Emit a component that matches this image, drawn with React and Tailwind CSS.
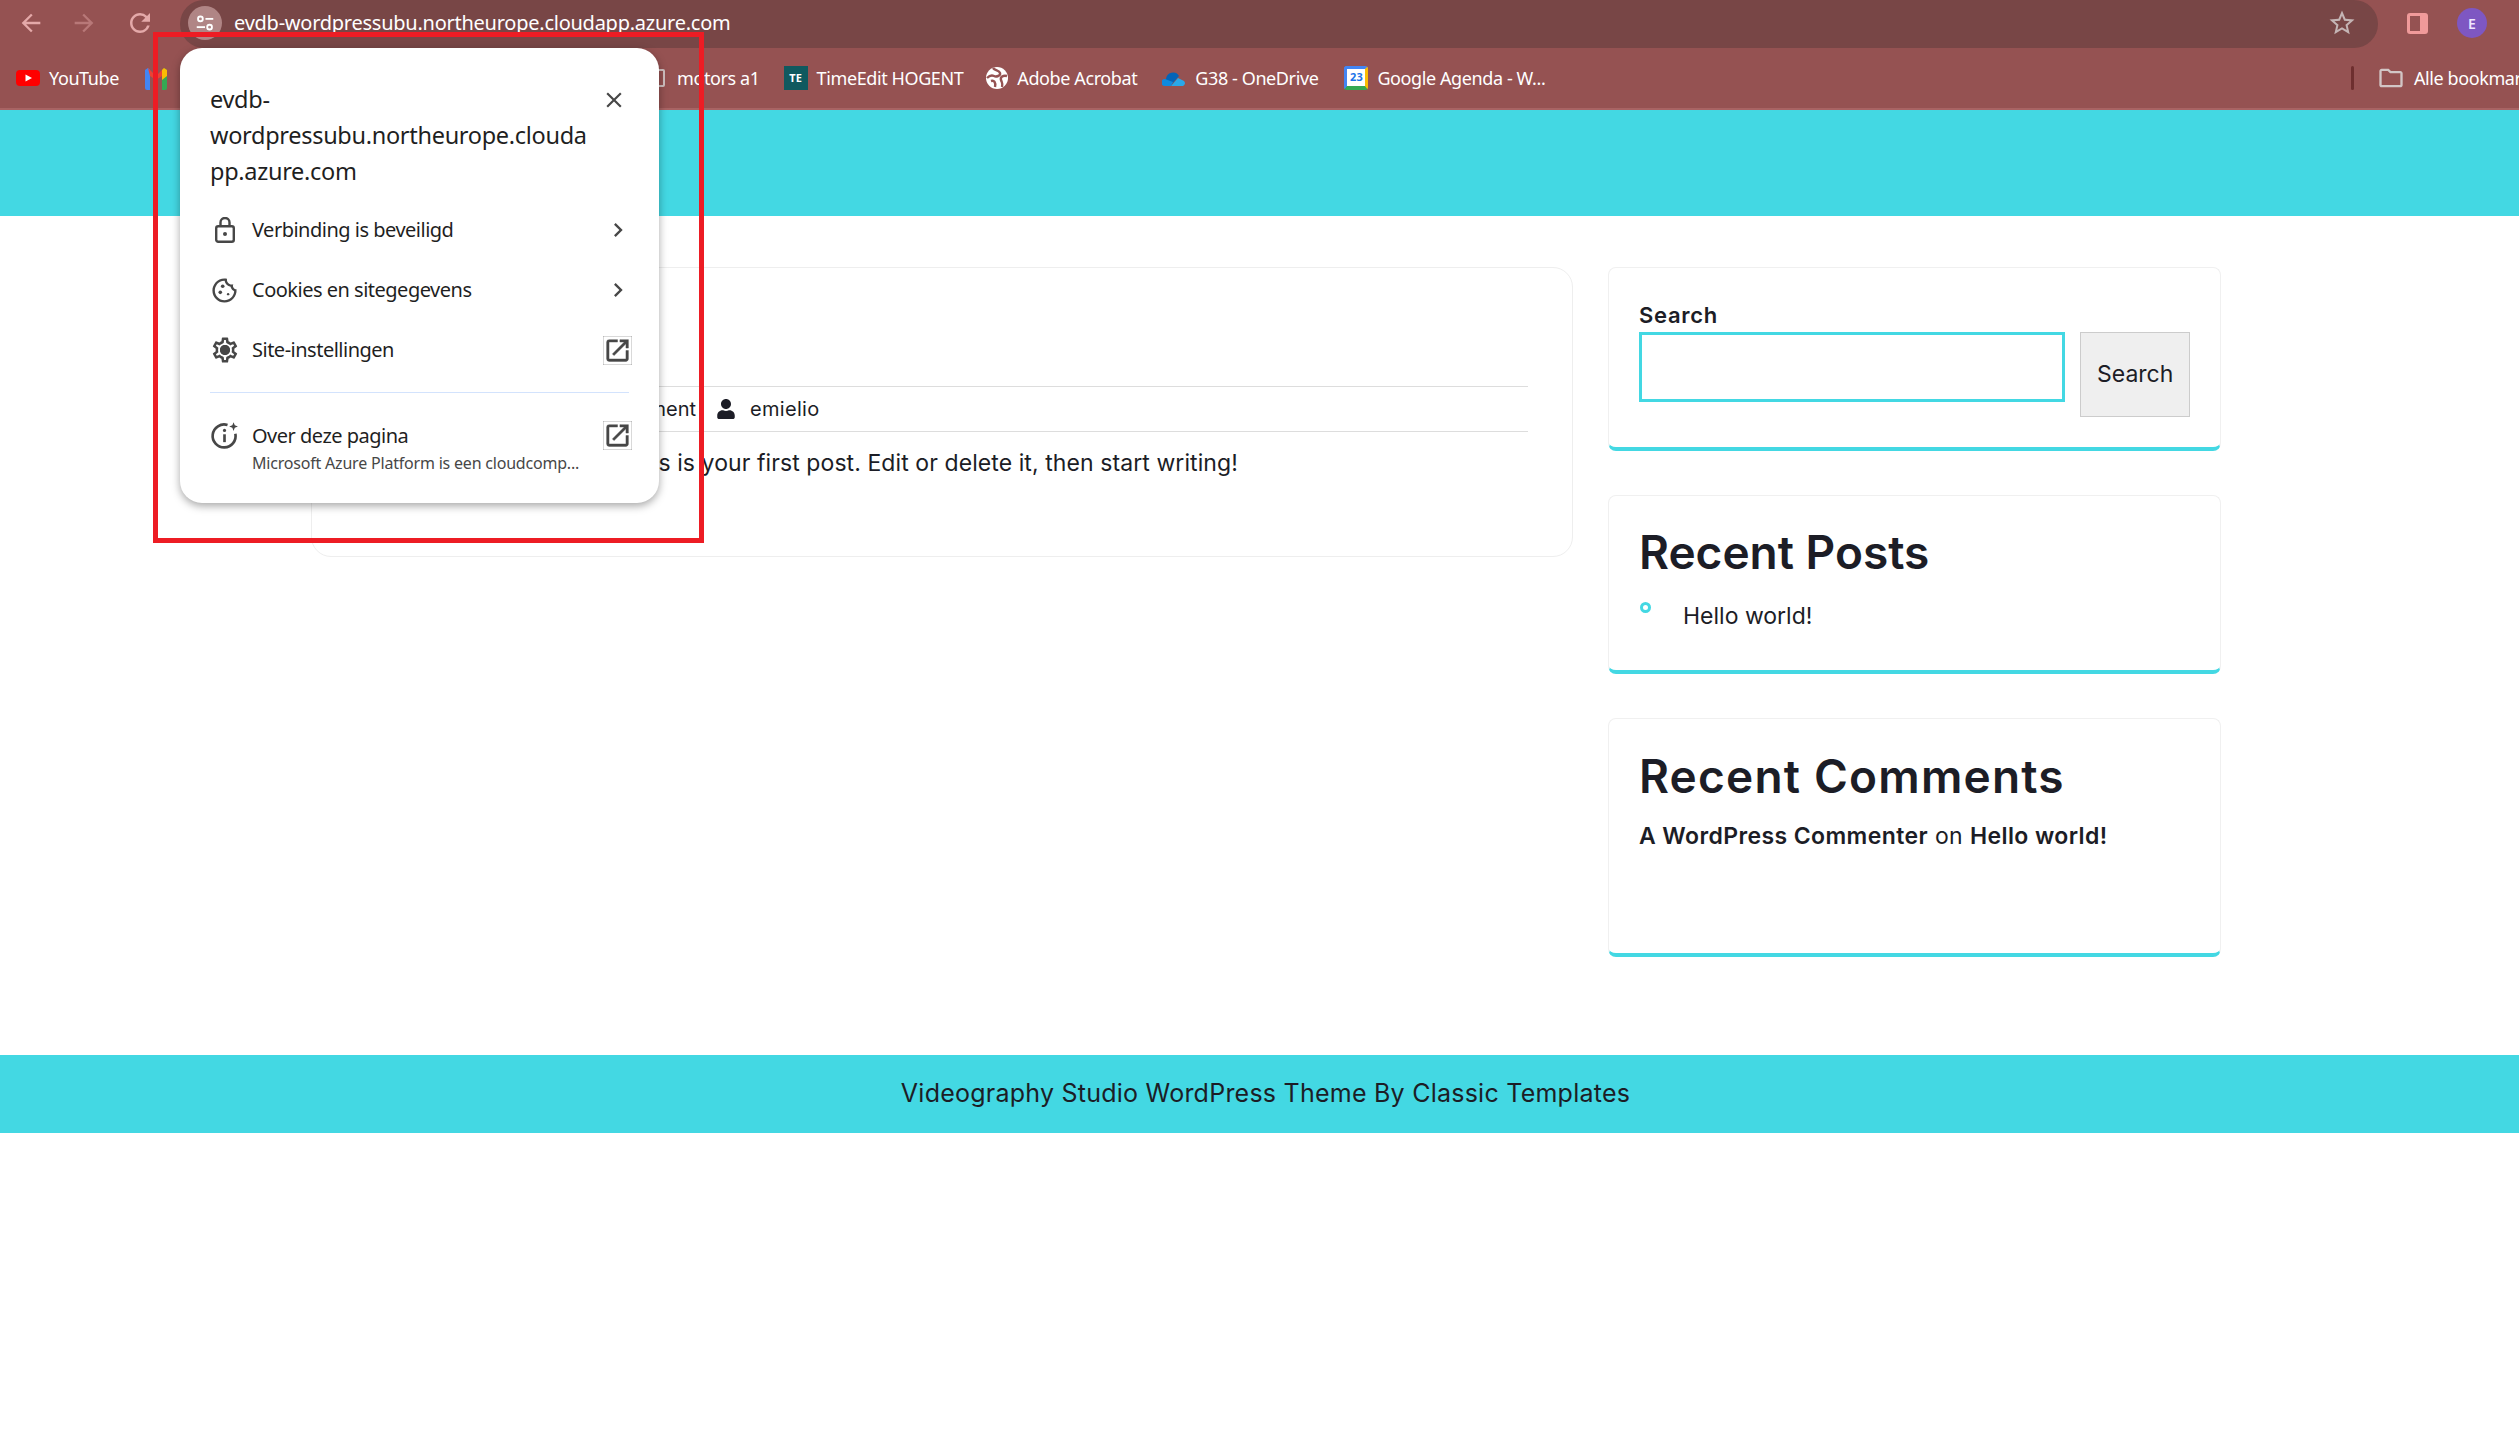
import {
  MdArrowBack,
  MdArrowForward,
  MdRefresh,
  MdStarBorder,
  MdChevronRight,
  MdClose,
  MdOutlineCookie,
  MdOutlineSettings,
  MdOpenInNew,
  MdOutlineFolder,
} from "react-icons/md"
import { FaUser } from "react-icons/fa"

const ui = "font-['Noto_Sans',sans-serif]"
const poppins = "font-['Inter',sans-serif]"

function Bookmark({ icon, label, className }) {
  return (
    <div className={`flex items-center gap-[9px] shrink-0 ${className}`}>
      {icon}
      <span className="text-[18px] tracking-[-0.4px] text-white whitespace-nowrap">{label}</span>
    </div>
  )
}

function SiteInfoIcon({ className }) {
  return (
    <svg viewBox="0 0 24 24" className={className} fill="none" stroke="currentColor" strokeWidth="2">
      <circle cx="7" cy="7.5" r="2.6" />
      <path d="M12.5 7.5H21" />
      <circle cx="17" cy="16.5" r="2.6" />
      <path d="M3 16.5h9" />
    </svg>
  )
}

function LockIcon() {
  return (
    <svg viewBox="0 0 20 26" className="ml-[5px] w-[20px] h-[26px]" fill="none" stroke="currentColor" strokeWidth="2.4">
      <rect x="1.2" y="9.2" width="17.6" height="15.6" rx="2" />
      <path d="M5.5 9V5.5a4.5 4.5 0 0 1 9 0V9" />
      <circle cx="10" cy="17" r="2" fill="currentColor" stroke="none" />
    </svg>
  )
}

function GearIcon() {
  return (
    <span className="relative flex h-[30px] w-[30px] items-center justify-center">
      <MdOutlineSettings className="h-[30px] w-[30px]" />
      <span className="absolute h-[10px] w-[10px] rounded-full bg-[#474747]" />
    </span>
  )
}

function AboutIcon({ className }) {
  return (
    <svg viewBox="0 0 24 24" className={className} fill="none" stroke="currentColor" strokeWidth="2.2">
      <path d="M14.5 3.3A9.5 9.5 0 1 0 21 10.5" />
      <path d="M12 11v6.5" />
      <circle cx="12" cy="7.8" r="1.3" fill="currentColor" stroke="none" />
      <path d="M19.5 1l1 2.6 2.6 1-2.6 1-1 2.6-1-2.6-2.6-1 2.6-1z" fill="currentColor" stroke="none" />
    </svg>
  )
}

function ExternalIcon() {
  return <MdOpenInNew className="w-[29px] h-[29px]" stroke="currentColor" strokeWidth={0.35} />
}

function PopupRow({ icon, label, trailing }) {
  return (
    <div className="flex items-center h-[60px] pl-[30px] pr-[27px]">
      <span className="w-[42px] flex items-center text-[#474747]">{icon}</span>
      <span className="flex-1 text-[20px] tracking-[-0.5px] text-[#1f1f1f]">{label}</span>
      <span className="text-[#474747]">{trailing}</span>
    </div>
  )
}

function SiteInfoPopup() {
  return (
    <div className={`absolute left-[180px] top-[48px] w-[479px] h-[455px] bg-white rounded-[22px] shadow-[0_3px_8px_rgba(0,0,0,0.35)] ${ui}`}>
      <div className="flex pl-[30px] pr-[32px] pt-[34px]">
        <p className="text-[23.5px] leading-[36px] tracking-[-0.3px] text-[#1f1f1f] whitespace-nowrap -mt-[1px]">
          evdb-
          <br />
          wordpressubu.northeurope.clouda
          <br />
          pp.azure.com
        </p>
        <MdClose className="ml-auto mt-[5px] w-[26px] h-[26px] text-[#474747]" />
      </div>
      <div className="mt-[11px]">
        <PopupRow icon={<LockIcon />} label="Verbinding is beveiligd" trailing={<MdChevronRight className="w-[28px] h-[28px]" />} />
        <PopupRow icon={<MdOutlineCookie className="w-[29px] h-[29px]" />} label="Cookies en sitegegevens" trailing={<MdChevronRight className="w-[28px] h-[28px]" />} />
        <PopupRow icon={<GearIcon />} label="Site-instellingen" trailing={<ExternalIcon />} />
      </div>
      <div className="mx-[30px] mt-[12px] h-[1px] bg-[#d3e3fd]" />
      <div className="flex items-start pl-[30px] pr-[27px] pt-[28px]">
        <AboutIcon className="w-[29px] h-[29px] mr-[13px] text-[#474747] shrink-0" />
        <div className="flex-1">
          <p className="text-[20px] leading-[30px] tracking-[-0.5px] text-[#1f1f1f]">Over deze pagina</p>
          <p className="text-[16px] leading-[24px] tracking-[-0.2px] text-[#474747]">Microsoft Azure Platform is een cloudcomp...</p>
        </div>
        <span className="text-[#474747]"><ExternalIcon /></span>
      </div>
    </div>
  )
}

function Card({ className, children }) {
  return (
    <section className={`rounded-[8px] border border-[#f0f0f0] border-b-4 border-b-[#43d8e3] bg-white px-[30px] ${className}`}>
      {children}
    </section>
  )
}

export default function App() {
  return (
    <div className={`relative min-h-screen overflow-hidden bg-white text-[#1c1d26] ${poppins}`}>
      {/* browser toolbar */}
      <div className={`flex h-[48px] items-center bg-[#955252] pb-[2px] ${ui}`}>
        <MdArrowBack className="ml-[17px] w-[28px] h-[28px] text-[#e4a9a9]" />
        <MdArrowForward className="ml-[25px] w-[28px] h-[28px] text-[#b87878]" />
        <MdRefresh className="ml-[27px] w-[30px] h-[30px] text-[#e4a9a9]" />
        <div className="ml-[25px] flex h-[48px] flex-1 items-center self-start rounded-[24px] bg-[#784646] pb-[2px]">
          <div className="ml-[8px] flex h-[34px] w-[34px] items-center justify-center rounded-full bg-[#b08585]">
            <SiteInfoIcon className="w-[22px] h-[22px] text-white" />
          </div>
          <span className="ml-[12px] text-[20px] tracking-[-0.25px] text-white whitespace-nowrap">evdb-wordpressubu.northeurope.cloudapp.azure.com</span>
          <MdStarBorder className="ml-auto mr-[21px] w-[30px] h-[30px] text-[#c4b4b4]" />
        </div>
        <div className="ml-[29px] flex h-[21px] w-[21px] rounded-[3px] bg-[#f09a9a] p-[3px]">
          <div className="h-full w-[10px] bg-[#955252]" />
        </div>
        <div className="ml-[29px] mr-[32px] flex h-[30px] w-[30px] items-center justify-center rounded-full bg-[#7e57c2] text-[14px] font-semibold text-[#f0e6ff]">E</div>
      </div>

      {/* bookmarks bar */}
      <div className={`flex h-[62px] items-center border-b-2 border-[#a86464] bg-[#955252] pl-[16px] ${ui}`}>
        <Bookmark
          label="YouTube"
          icon={
            <svg viewBox="0 0 24 16" className="w-[24px] h-[16px]">
              <rect width="24" height="16" rx="4" fill="#f00" />
              <path d="M9.5 4.5l6.5 3.5-6.5 3.5z" fill="#fff" />
            </svg>
          }
        />
        <svg viewBox="0 0 22 24" className="ml-[26px] w-[22px] h-[24px] shrink-0">
          <path d="M0 4l3-2 2 2v20H2a2 2 0 0 1-2-2z" fill="#4285f4" />
          <path d="M17 4l2-2 3 2v18a2 2 0 0 1-2 2h-3z" fill="#34a853" />
          <path d="M3 2l8 8 8-8-2 8-6 4-6-4z" fill="#ea4335" />
          <path d="M17 4l2-2 3 2v6l-5 4z" fill="#fbbc04" />
        </svg>
        <Bookmark
          className="ml-[485px] gap-[12px]"
          label="motors a1"
          icon={<span className="h-[18px] w-[13px] rounded-[2px] border-2 border-[#cfc0c0]" />}
        />
        <Bookmark
          className="ml-[24px]"
          label="TimeEdit HOGENT"
          icon={<span className="flex h-[24px] w-[24px] items-center justify-center bg-[#10595f] text-[11px] font-bold text-white">TE</span>}
        />
        <Bookmark
          className="ml-[23px]"
          label="Adobe Acrobat"
          icon={
            <svg viewBox="0 0 22 22" className="w-[22px] h-[22px]">
              <circle cx="11" cy="11" r="11" fill="#fff" />
              <path d="M7 1c2 3 6 2 7 5s-4 4-6 3-5 0-7 2M21 9c-4-1-7 1-6 4s2 3 1 7M5 14c3-1 5 1 4 6" fill="none" stroke="#955252" strokeWidth="2.4" />
            </svg>
          }
        />
        <Bookmark
          className="ml-[25px] gap-[8px]"
          label="G38 - OneDrive"
          icon={
            <svg viewBox="0 0 24 16" className="w-[24px] h-[16px]">
              <path d="M4 9a7 7 0 0 1 13-3l-7 8H3a3 3 0 0 1 1-5z" fill="#0364b8" />
              <path d="M9 16l7-8 6 3a3 3 0 0 1-1 5z" fill="#28a8ea" />
              <path d="M3 9l8 3-2 4H3a3 3 0 0 1 0-7z" fill="#0f8ae0" />
            </svg>
          }
        />
        <Bookmark
          className="ml-[26px]"
          label="Google Agenda - W..."
          icon={
            <span className="flex h-[24px] w-[24px] items-center justify-center rounded-[3px] border-x-[3px] border-t-[3px] border-b-[4px] border-t-[#4285f4] border-l-[#4285f4] border-r-[#fbbc04] border-b-[#34a853] bg-white text-[11px] font-bold text-[#1a73e8]">23</span>
          }
        />
        <div className="ml-auto h-[24px] w-[3px] shrink-0 rounded-full bg-[#6e2f2f]" />
        <div className="ml-[23px] mr-[-20px] flex shrink-0 items-center gap-[9px]">
          <MdOutlineFolder className="w-[28px] h-[28px] text-[#d2c6c6]" />
          <span className="text-[18px] tracking-[-0.4px] text-white whitespace-nowrap">Alle bookmarks</span>
        </div>
      </div>

      {/* site header */}
      <div className="h-[106px] bg-[#43d8e3]" />

      {/* site content */}
      <div className="flex gap-[35px] pb-[98px] pl-[311px] pt-[51px]">
        <article className="h-[290px] w-[1262px] rounded-[20px] border border-[#eeeeee] px-[44px] pt-[118px]">
          <div className="flex h-[46px] items-center border-y border-[#dddddd] text-[20px]">
            <span className="w-[340px] text-right">1 Comment</span>
            <FaUser className="ml-[20px] w-[20px] h-[20px] text-[#1c1d26]" />
            <span className="ml-[14px] tracking-[0.3px]">emielio</span>
          </div>
          <p className="mt-[14px] text-[23px] leading-[34px] tracking-[0.08px]">Welcome to WordPress. This is your first post. Edit or delete it, then start writing!</p>
        </article>

        <aside className="flex w-[613px] flex-col gap-[44px]">
          <Card className="h-[184px] pt-[31px]">
            <label className="block text-[22px] font-semibold leading-[33px] tracking-[0.7px]">Search</label>
            <div className="flex items-start gap-[15px]">
              <input className="h-[70px] w-[428px] border-[3px] border-[#43d8e3] bg-white outline-none" />
              <button className="h-[85px] w-[110px] border border-[#cccccc] bg-[#efefef] text-[23px]">Search</button>
            </div>
          </Card>
          <Card className="h-[179px] pt-[27px]">
            <h2 className="text-[46px] font-semibold leading-[58px]">Recent Posts</h2>
            <div className="mt-[18px] flex">
              <span className="ml-[1px] mt-[3px] h-[11px] w-[11px] rounded-full border-[3px] border-[#43d8e3]" />
              <span className="ml-[32px] text-[23px] leading-[34px]">Hello world!</span>
            </div>
          </Card>
          <Card className="h-[239px] pt-[28px]">
            <h2 className="text-[46px] font-semibold leading-[58px] tracking-[1.2px]">Recent Comments</h2>
            <p className="mt-[14px] text-[23px] leading-[34px] tracking-[0.4px]">
              <strong className="font-semibold">A WordPress Commenter</strong> on <strong className="font-semibold">Hello world!</strong>
            </p>
          </Card>
        </aside>
      </div>

      {/* footer */}
      <div className="flex h-[78px] items-center justify-center bg-[#43d8e3] pl-[12px] text-[25px] tracking-[0.24px]">
        Videography Studio WordPress Theme By Classic Templates
      </div>

      <SiteInfoPopup />

      {/* red annotation box */}
      <div className="absolute left-[153px] top-[32px] h-[511px] w-[551px] border-[5px] border-[#ed1c24]" />
    </div>
  )
}
